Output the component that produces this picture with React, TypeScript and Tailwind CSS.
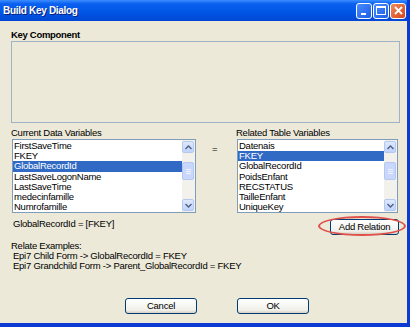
import React from "react";

const leftVars = [
  "FirstSaveTime",
  "FKEY",
  "GlobalRecordId",
  "LastSaveLogonName",
  "LastSaveTime",
  "medecinfamille",
  "Numrofamille",
];

const rightVars = [
  "Datenais",
  "FKEY",
  "GlobalRecordId",
  "PoidsEnfant",
  "RECSTATUS",
  "TailleEnfant",
  "UniqueKey",
];

// tahoma-ish: narrow letters
const txt = "text-[9.5px] tracking-[-0.25px]";

function ScrollArrow({ up }: { up?: boolean }) {
  return (
    <div className="flex h-[12px] w-[12px] items-center justify-center rounded-[2px] border border-[#b5c8f0] bg-[linear-gradient(to_bottom,#dfe9fd,#c1d3fb)]">
      <svg width="7" height="5" viewBox="0 0 7 5">
        <path
          d={up ? "M0.5 4 L3.5 1 L6.5 4" : "M0.5 1 L3.5 4 L6.5 1"}
          fill="none"
          stroke="#4d6185"
          strokeWidth="1.4"
        />
      </svg>
    </div>
  );
}

function ListBox({ items, selected, className }: { items: string[]; selected: number; className: string }) {
  return (
    <div className={`flex h-[74px] overflow-hidden border border-[#7f9db9] bg-white ${className}`}>
      <div className="flex-1 pt-[1px]">
        {items.map((item, index) => (
          <div
            key={item}
            className={`h-[10.2px] pl-[1px] leading-[10.2px] ${txt} ${
              index === selected ? "bg-[#316ac5] text-white" : "text-black"
            }`}
          >
            {item}
          </div>
        ))}
      </div>
      <div className="flex w-[13px] flex-col bg-[#f3f1ec] py-[1px]">
        <ScrollArrow up />
        <div className="mt-[9px] flex h-[18px] w-[12px] flex-col items-center justify-center gap-[1px] rounded-[2px] border border-[#b5c8f0] bg-[#c8d7fb]">
          <div className="h-[1px] w-[5px] bg-[#eef3fe]" />
          <div className="h-[1px] w-[5px] bg-[#eef3fe]" />
          <div className="h-[1px] w-[5px] bg-[#eef3fe]" />
        </div>
        <div className="mt-auto">
          <ScrollArrow />
        </div>
      </div>
    </div>
  );
}

function XpButton({ label, className }: { label: string; className: string }) {
  return (
    <div
      className={`flex h-[16px] items-center justify-center rounded-[3px] border border-[#003c74] bg-[linear-gradient(to_bottom,#ffffff,#f0f0ea_80%,#d6d0c5)] text-black ${txt} ${className}`}
    >
      {label}
    </div>
  );
}

export default function App() {
  return (
    <div
      className="relative flex h-[327px] w-[410px] flex-col overflow-hidden border-b-[4px] border-r-[3px] border-[#0b3bd3] bg-[#ece9d8]"
      style={{ fontFamily: '"Liberation Sans", Arial, sans-serif' }}
    >
      <div className="flex h-[21px] shrink-0 items-center justify-between bg-[linear-gradient(to_bottom,#3c8dff_0%,#0a60f0_18%,#0055e5_60%,#0047d4_100%)] pl-[3px] pr-[1px]">
        <span className="text-[10px] font-bold tracking-[-0.3px] text-white [text-shadow:1px_1px_0_#0a1f7a]">
          Build Key Dialog
        </span>
        <div className="flex gap-[1px]">
          <div className="flex h-[16px] w-[16px] items-end justify-start rounded-[3px] border border-white bg-[linear-gradient(135deg,#4a8cff,#1c5de8)] pb-[3px] pl-[4px]">
            <div className="h-[2px] w-[5px] bg-white" />
          </div>
          <div className="flex h-[16px] w-[16px] items-center justify-center rounded-[3px] border border-white bg-[linear-gradient(135deg,#4a8cff,#1c5de8)]">
            <div className="h-[9px] w-[10px] border border-t-[2px] border-white" />
          </div>
          <div className="flex h-[16px] w-[16px] items-center justify-center rounded-[3px] border border-white bg-[linear-gradient(135deg,#f08a5a,#d6451c)]">
            <svg width="9" height="9" viewBox="0 0 9 9">
              <path d="M1 1 L8 8 M8 1 L1 8" stroke="white" strokeWidth="1.8" />
            </svg>
          </div>
        </div>
      </div>

      <div className="flex flex-1 flex-col pl-[11px] pr-[7px]">
        <div className="mt-[8px] text-[9.5px] font-bold leading-[12px] tracking-[-0.3px] text-black">Key Component</div>
        <div className="h-[82px] border border-[#a0b2c6] bg-[#ece9d8]" />

        <div className={`mt-[4px] flex leading-[12px] text-black ${txt}`}>
          <span className="w-[225px]">Current Data Variables</span>
          <span>Related Table Variables</span>
        </div>
        <div className="flex items-start">
          <ListBox items={leftVars} selected={2} className="ml-[1px] w-[184px]" />
          <span className={`ml-[16px] mt-[4px] w-[25px] leading-[12px] ${txt}`}>=</span>
          <ListBox items={rightVars} selected={1} className="w-[161px]" />
        </div>

        <div className="mt-[4px] flex items-start justify-between">
          <span className={`ml-[2px] mt-[1px] leading-[12px] ${txt}`}>GlobalRecordId = [FKEY]</span>
          <XpButton label="Add Relation" className="mr-[1px] mt-[2px] h-[13px] w-[69px]" />
        </div>

        <div className={`mt-[6px] leading-[10px] text-black ${txt}`}>
          <div>Relate Examples:</div>
          <div className="pl-[2px]">Epi7 Child Form -&gt; GlobalRecordId = FKEY</div>
          <div className="pl-[2px]">Epi7 Grandchild Form -&gt; Parent_GlobalRecordId = FKEY</div>
        </div>

        <div className="mt-[27px] flex">
          <XpButton label="Cancel" className="ml-[114px] w-[72px]" />
          <XpButton label="OK" className="ml-[40px] w-[72px]" />
        </div>
      </div>

      <div className="pointer-events-none absolute left-[318px] top-[216px] h-[20px] w-[88px] rounded-[50%] border-2 border-[#e0504a]" />
    </div>
  );
}
